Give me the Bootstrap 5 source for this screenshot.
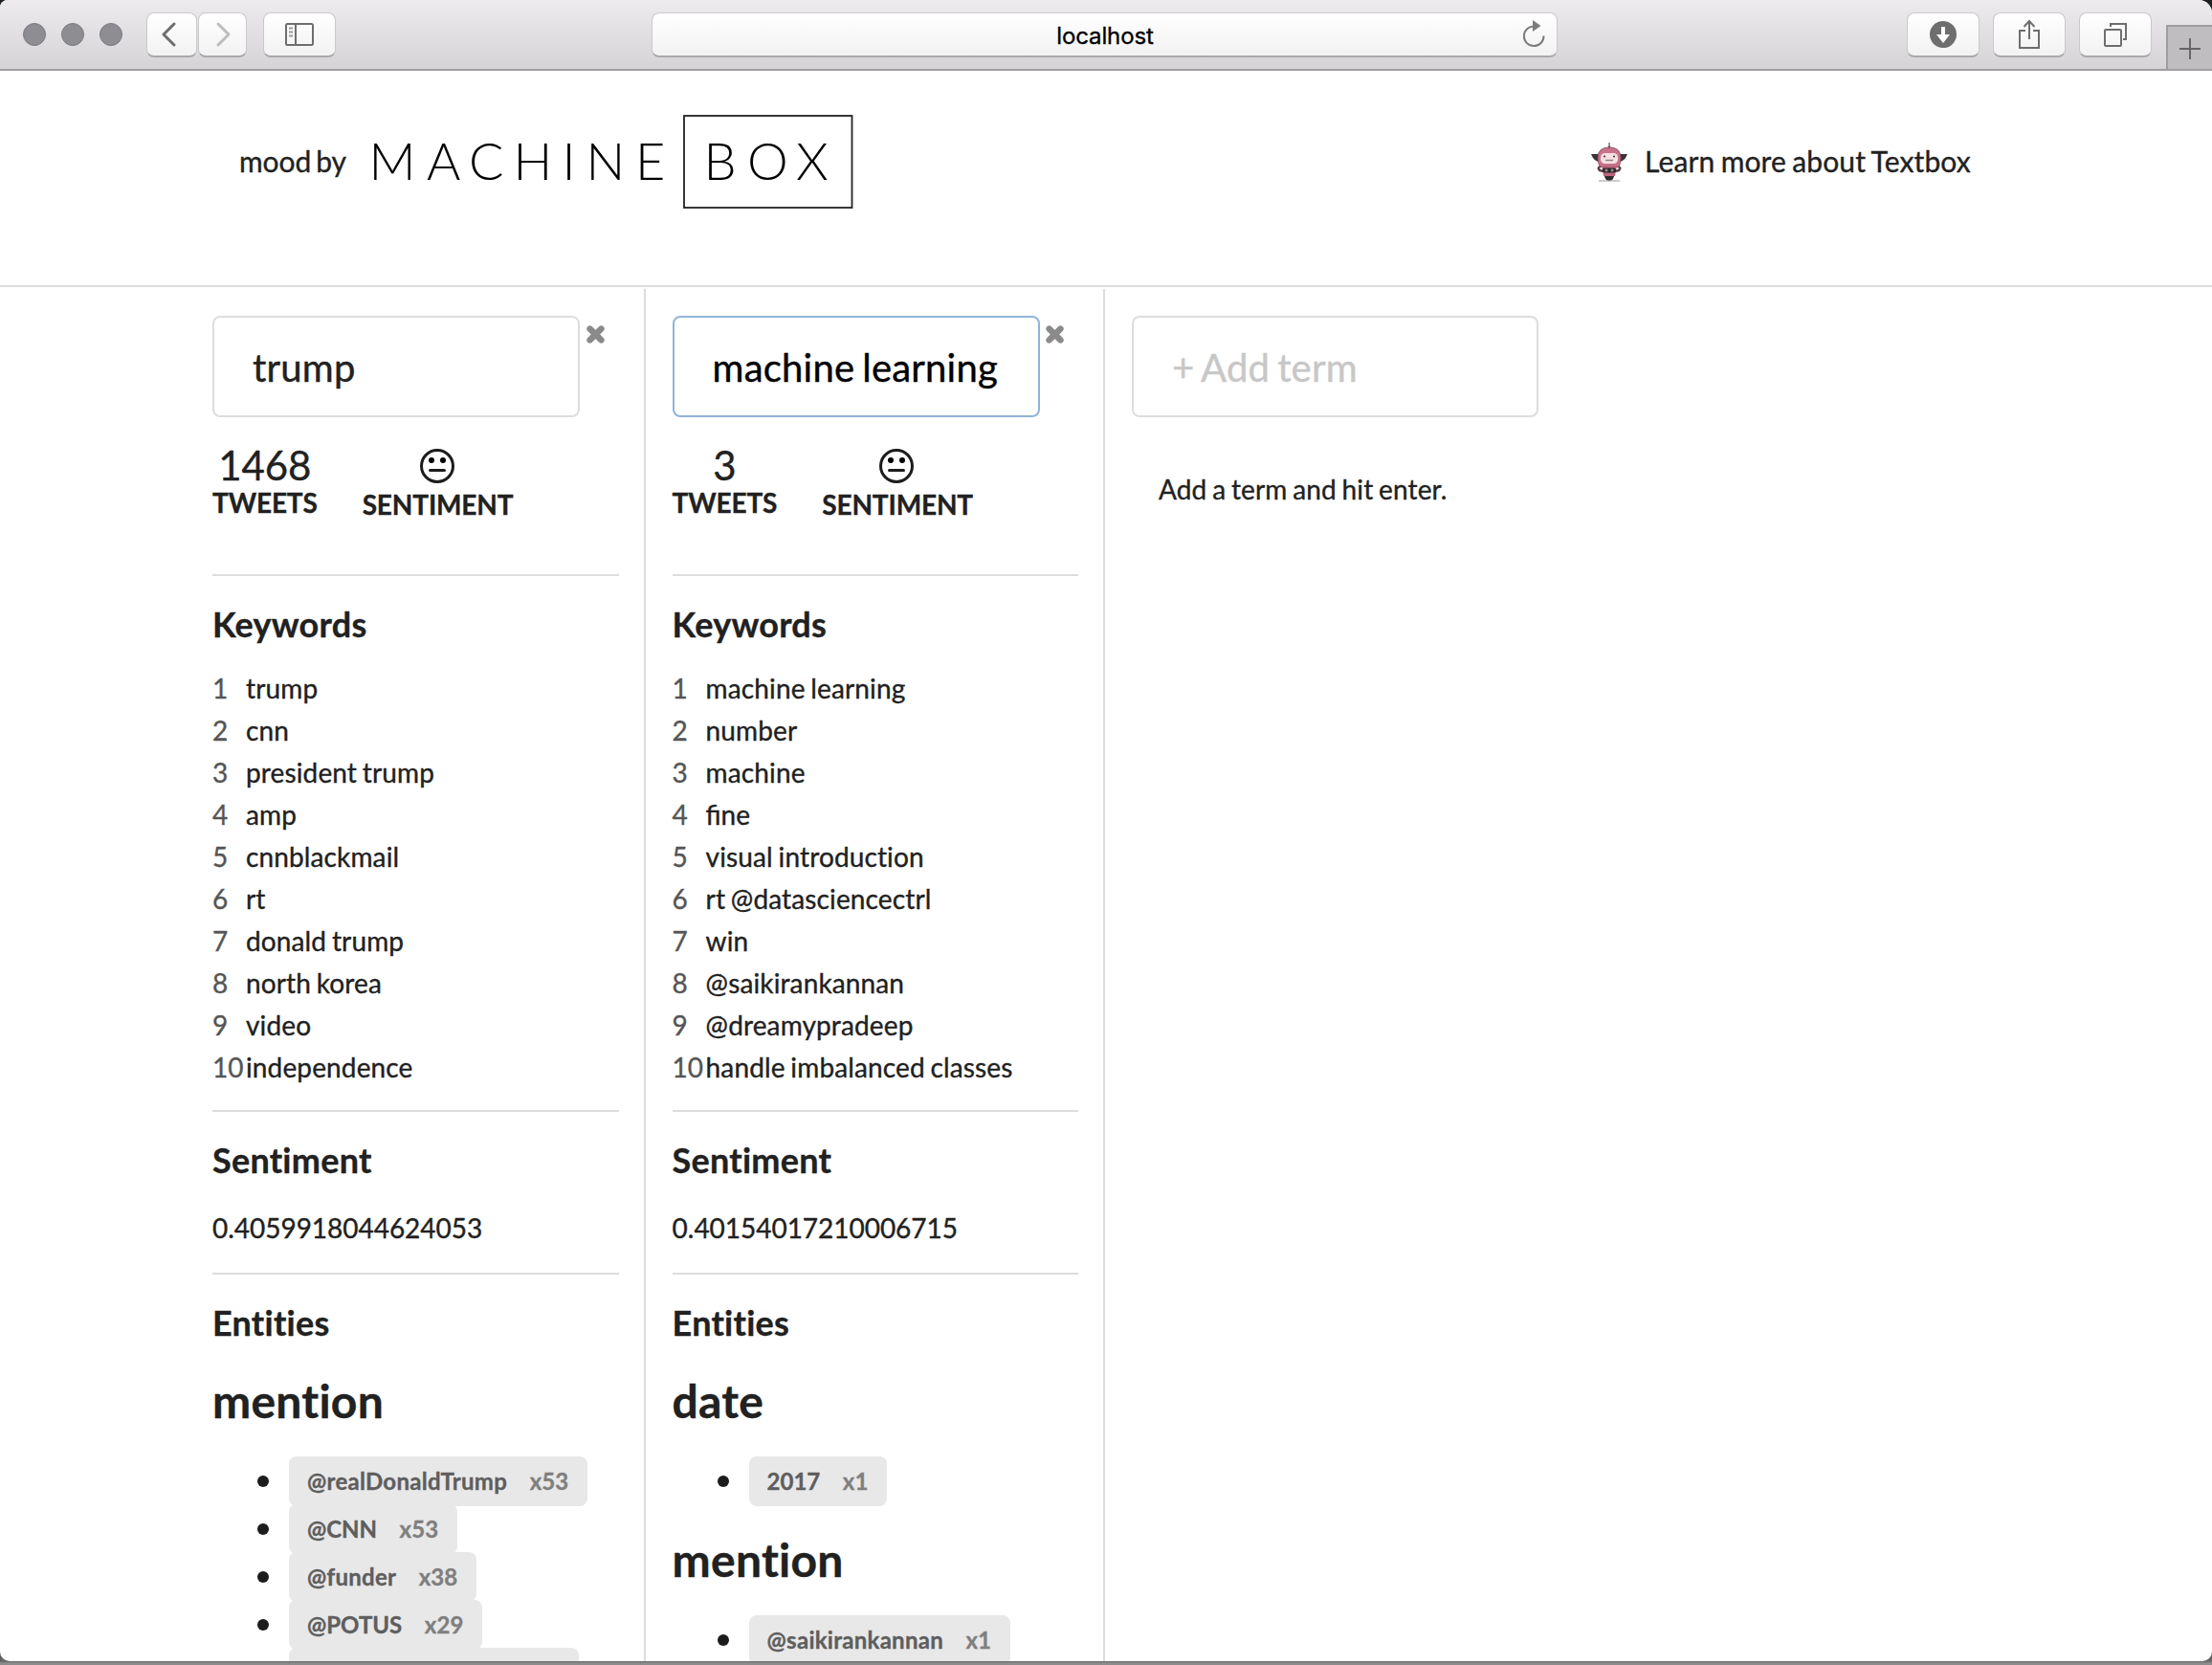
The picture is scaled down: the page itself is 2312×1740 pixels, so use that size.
<!DOCTYPE html>
<html lang="en">
<head>
<meta charset="utf-8">
<title>mood by Machine Box</title>
<link href="https://cdn.jsdelivr.net/npm/bootstrap@5.3.0/dist/css/bootstrap.min.css" rel="stylesheet">
<style>
body{width:2312px;height:1740px;overflow:hidden;background:linear-gradient(#1c2020 0 1700px,#666 1736px,#8c8c8c 1738px);font-family:Lato,sans-serif;font-size:28px;line-height:40px;color:#212121;letter-spacing:.13px;word-spacing:-.055em;-webkit-text-stroke:.35px}
svg{display:block;flex:none}
.win{height:1736px;border-radius:8px 14px 10px 10px;overflow:hidden;background:#fff}
.chrome{height:74px;flex:none;background:linear-gradient(#edebee,#d5d3d6);border-bottom:2px solid #a09ea2;padding:13px 0 0 24px}
.dot{width:24px;height:24px;border-radius:50%;background:#8e8d92;border:1px solid #7b7a80;margin-right:16px}
.tool,.address{height:47px;flex:none;border:1px solid #cbc9cc;border-bottom:2px solid #aaa8ab;border-radius:8px;background:linear-gradient(#fff,#f2f2f2)}
.tool{width:76px;margin-left:14px}
.address{width:947px;margin-left:330px;padding-right:11px}
.newtab{width:48px;height:46px;margin-top:13px;background:#bfbdc0;border:solid #9f9da1;border-width:2px 0 0 2px;margin-left:15px}
.host{font-family:Inter,sans-serif;font-size:24px;color:#000;letter-spacing:-.1px;padding:3px 0 0 38px}
.masthead{height:226px;flex:none;border-bottom:2px solid #ddd;padding:46px 252px 0 250px;font-size:30px}
.brandrow{height:98px}
.mood{width:112px;margin-right:24px;white-space:nowrap;padding-bottom:2px;letter-spacing:-.1px;word-spacing:-.08em}
.learn{width:341px;margin-left:18px;white-space:nowrap;padding-bottom:2px}
.board{padding-left:195px;margin-top:2px;min-height:0}
.term{width:480px;flex:none;border-right:2px solid #ddd;padding:28px 26px 0 27.600px}
.term.first{padding-left:27px}
.term.last{border:0;width:510px;padding-left:28px}
.term input{width:384px;height:106px;border:2px solid #ddd;border-radius:8px;padding:2px 40px 0;font-size:40px;letter-spacing:.2px;word-spacing:-.06em;-webkit-text-stroke:.4px;color:#212121;background:#fff;outline:0}
.term input.active{border-color:#8fb5d9;color:#000}
.term input::placeholder{color:#c7c7c7;opacity:1}
.term.last input{width:425px}
.stats{height:164px;gap:47px;padding-top:26px;font-weight:700}
.figure-value{font-size:42px;line-height:48px;font-weight:400;letter-spacing:-.1px}
.stats .caption-text{line-height:30px;letter-spacing:-.15px}
.stats .face{height:50px;padding-top:7px}
.face svg{-webkit-text-stroke:0;position:relative;left:-1px}
.rule{height:2px;background:#ddd;flex:none;width:424.500px}
h3{font-size:36px;line-height:46px;font-weight:700;margin:0;letter-spacing:.25px}
h2{font-size:48px;line-height:60px;font-weight:700;margin:0;letter-spacing:.25px}
.words{list-style:none;padding:0;margin:0;height:451px}
.words li{display:flex;height:44px;line-height:44px;white-space:nowrap}
.words span{width:35px;color:#555;flex:none;letter-spacing:0}
.words .lig{letter-spacing:0}
.score{letter-spacing:-.03px}
.ents{list-style:none;margin:0;padding:0 0 0 47px}
.ents li{height:50px;display:flex;align-items:center}
.ents li::before{content:"";width:12px;height:12px;border-radius:50%;background:#1c1c1c;margin-right:21px;flex:none}
.tag{height:52px;line-height:52px;border-radius:8px;background:#e8e8e8;color:#5e5e5e;font-size:24px;font-weight:700;padding:0 20px 0 19px;white-space:nowrap;letter-spacing:.27px}
.tag.upper{letter-spacing:0}
.tag span{color:#7f7f7f;margin-left:23.500px;letter-spacing:.1px}
</style>
<script src="https://cdn.jsdelivr.net/npm/bootstrap@5.3.0/dist/js/bootstrap.bundle.min.js"></script>
</head>
<body>
<div class="win d-flex flex-column">
  <div class="chrome d-flex align-items-start">
    <div class="d-flex" style="padding-top:11px"><i class="dot"></i><i class="dot"></i><i class="dot"></i></div>
    <div class="tool d-flex align-items-center justify-content-center" style="width:53px;margin-left:9px"><svg width="22" height="32" viewBox="0 0 22 32" fill="none" stroke="#6e6e6e" stroke-width="3" stroke-linecap="round" stroke-linejoin="round"><path d="M13 5 2 16 13 27"/></svg></div>
    <div class="tool d-flex align-items-center justify-content-center" style="width:51px;margin-left:1px"><svg width="20" height="32" viewBox="0 0 20 32" fill="none" stroke="#bdbdbd" stroke-width="3" stroke-linecap="round" stroke-linejoin="round"><path d="M5 5 16 16 5 27"/></svg></div>
    <div class="tool d-flex align-items-center justify-content-center" style="margin-left:17px"><svg width="30" height="24" viewBox="0 0 30 24" fill="none" stroke="#6e6e6e" stroke-width="2"><rect x="1" y="1" width="28" height="22" rx="1.500"/><path d="M11 1v22"/><path d="M4 5.500h4M4 9.500h4M4 13.500h4" stroke="#999"/></svg></div>
    <div class="address d-flex align-items-center"><span class="host flex-fill text-center">localhost</span><svg width="26" height="30" viewBox="0 0 26 30" fill="none" stroke="#7c7c7c" stroke-width="2"><path d="M14 6.500a10.300 10.300 0 1 0 9.500 10"/><path d="M12 0v12l8.500-6z" fill="#7c7c7c" stroke="none"/></svg></div>
    <div class="tool d-flex align-items-center justify-content-center" style="margin-left:365px"><svg width="28" height="28" viewBox="0 0 28 28"><circle cx="14" cy="14" r="14" fill="#6e6e6e"/><path d="M12 6h4v8h5l-7 9-7-9h5z" fill="#fff"/></svg></div>
    <div class="tool d-flex align-items-center justify-content-center"><svg width="24" height="32" viewBox="0 0 24 32" fill="none" stroke="#6e6e6e" stroke-width="2"><path d="M8 12H2v18h20V12h-6M12 21V2M6.500 8 12 2l5.500 6"/></svg></div>
    <div class="tool d-flex align-items-center justify-content-center"><svg width="26" height="26" viewBox="0 0 26 26" fill="none" stroke="#6e6e6e" stroke-width="2"><rect x="2" y="8" width="17" height="17" rx="1"/><path d="M8 5V2h16v16h-3"/></svg></div>
    <div class="newtab d-flex align-items-center justify-content-center"><svg width="22" height="24" viewBox="0 0 22 24" stroke="#666" stroke-width="2"><path d="M0 13h22M11 2v22"/></svg></div>
  </div>

  <header class="masthead">
    <div class="brandrow d-flex align-items-center">
      <span class="mood">mood by</span>
      <svg width="506" height="98" viewBox="386 0 506 98" font-family="Lato" font-size="54" font-weight="300">
        <text y="68" x="385.500 446 490 536.500 587.500 612.500 664">MACHINE</text>
        <text y="68" x="735.500 781 832">BOX</text>
        <rect x="715" y="1" width="175.500" height="96" fill="none" stroke="#222" stroke-width="1.800"/>
      </svg>
      <svg class="ms-auto" width="38" height="42" viewBox="0 0 38 42">
        <path d="M19 1v6" stroke="#555" stroke-width="1.200"/><circle cx="19" cy="6" r="1.500" fill="#555"/>
        <path d="M0 13l9 0v8q-6 0-9-8zM38 13l-9 0v8q6 0 9-8z" fill="#3b3338"/>
        <path d="M10 26q-4 1-1 4l4 1M28 26q4 1 1 4l-4 1" stroke="#5a434d" stroke-width="2.500" fill="none"/>
        <path d="M7 17q0-11 12-11t12 11-6 10H13Q7 27 7 17z" fill="#c9728a" stroke="#7d4759" stroke-width=".8"/>
        <rect x="10" y="12" width="18" height="11" rx="4.500" fill="#f6dfe3"/>
        <circle cx="14" cy="15.500" r="1" fill="#333"/><circle cx="24" cy="15.500" r="1" fill="#333"/>
        <path d="M15 19.500h8" stroke="#888" stroke-width="1.500"/>
        <path d="M11 25h16l-2 11H13z" fill="#b9657d"/><rect x="12" y="27.500" width="14" height="5" rx="2" fill="#2c2629"/>
        <circle cx="16" cy="30" r="1.100" fill="none" stroke="#ddd" stroke-width=".7"/><circle cx="22" cy="30" r="1.100" fill="none" stroke="#ddd" stroke-width=".7"/>
        <path d="M14 36h10q-1 5-5 5t-5-5z" fill="#2f292c"/><path d="M8 41h22" stroke="#aaa" stroke-width="1.200"/>
      </svg>
      <span class="learn">Learn more about Textbox</span>
    </div>
  </header>

  <main class="board d-flex flex-fill">
    <section class="term first">
      <div class="d-flex align-items-start"><input value="trump">
        <svg style="margin:10px 0 0 7px" width="19" height="19" viewBox="0 0 19 19" stroke="#8a8a8a" stroke-width="6.500" stroke-linecap="round"><path d="M3.600 3.600 15.400 15.400M15.400 3.600 3.600 15.400"/></svg></div>
      <div class="stats d-flex text-center">
        <div><div class="figure-value">1468</div><div class="caption-text">TWEETS</div></div>
        <div><div class="face"><svg class="mx-auto" width="36" height="36" viewBox="0 0 36 36"><circle cx="18" cy="18" r="16.500" fill="none" stroke="#1c1c1c" stroke-width="3"/><circle cx="12" cy="12" r="3" /><circle cx="24" cy="12" r="3"/><path d="M10.500 22.500h15" stroke="#1c1c1c" stroke-width="3" stroke-linecap="round"/></svg></div><div class="caption-text">SENTIMENT</div></div>
      </div>
      <div class="rule"></div>
      <h3 style="margin:27px 0 22px">Keywords</h3>
      <ol class="words">
        <li><span>1</span>trump</li><li><span>2</span>cnn</li><li><span>3</span>president trump</li><li><span>4</span>amp</li><li><span>5</span>cnnblackmail</li><li><span>6</span>rt</li><li><span>7</span>donald trump</li><li><span>8</span>north korea</li><li><span>9</span>video</li><li><span>10</span>independence</li>
      </ol>
      <div class="rule" style="margin-top:12px"></div>
      <h3 style="margin:27px 0 28px">Sentiment</h3>
      <div class="score">0.4059918044624053</div>
      <div class="rule" style="margin-top:27px"></div>
      <h3 style="margin:27px 0 29px">Entities</h3>
      <h2 style="margin-bottom:29px">mention</h2>
      <ul class="ents">
        <li><div class="tag">@realDonaldTrump<span>x53</span></div></li>
        <li><div class="tag upper">@CNN<span>x53</span></div></li>
        <li><div class="tag">@funder<span>x38</span></div></li>
        <li><div class="tag upper">@POTUS<span>x29</span></div></li>
        <li><div class="tag" style="width:303px"></div></li>
      </ul>
    </section>

    <section class="term">
      <div class="d-flex align-items-start"><input class="active" value="machine learning">
        <svg style="margin:10px 0 0 6.500px" width="19" height="19" viewBox="0 0 19 19" stroke="#8a8a8a" stroke-width="6.500" stroke-linecap="round"><path d="M3.600 3.600 15.400 15.400M15.400 3.600 3.600 15.400"/></svg></div>
      <div class="stats d-flex text-center">
        <div><div class="figure-value">3</div><div class="caption-text">TWEETS</div></div>
        <div><div class="face"><svg class="mx-auto" width="36" height="36" viewBox="0 0 36 36"><circle cx="18" cy="18" r="16.500" fill="none" stroke="#1c1c1c" stroke-width="3"/><circle cx="12" cy="12" r="3" /><circle cx="24" cy="12" r="3"/><path d="M10.500 22.500h15" stroke="#1c1c1c" stroke-width="3" stroke-linecap="round"/></svg></div><div class="caption-text">SENTIMENT</div></div>
      </div>
      <div class="rule"></div>
      <h3 style="margin:27px 0 22px">Keywords</h3>
      <ol class="words">
        <li><span>1</span>machine learning</li><li><span>2</span>number</li><li><span>3</span>machine</li><li class="lig"><span>4</span>fine</li><li><span>5</span>visual introduction</li><li><span>6</span>rt @datasciencectrl</li><li><span>7</span>win</li><li><span>8</span>@saikirankannan</li><li><span>9</span>@dreamypradeep</li><li><span>10</span>handle imbalanced classes</li>
      </ol>
      <div class="rule" style="margin-top:12px"></div>
      <h3 style="margin:27px 0 28px">Sentiment</h3>
      <div class="score">0.40154017210006715</div>
      <div class="rule" style="margin-top:27px"></div>
      <h3 style="margin:27px 0 29px">Entities</h3>
      <h2 style="margin-bottom:29px">date</h2>
      <ul class="ents"><li><div class="tag upper">2017<span>x1</span></div></li></ul>
      <h2 style="margin:27px 0 29px">mention</h2>
      <ul class="ents"><li><div class="tag">@saikirankannan<span>x1</span></div></li></ul>
    </section>

    <section class="term last">
      <input placeholder="+ Add term">
      <p style="margin:55px 0 0 28px">Add a term and hit enter.</p>
    </section>
  </main>
</div>
</body>
</html>
